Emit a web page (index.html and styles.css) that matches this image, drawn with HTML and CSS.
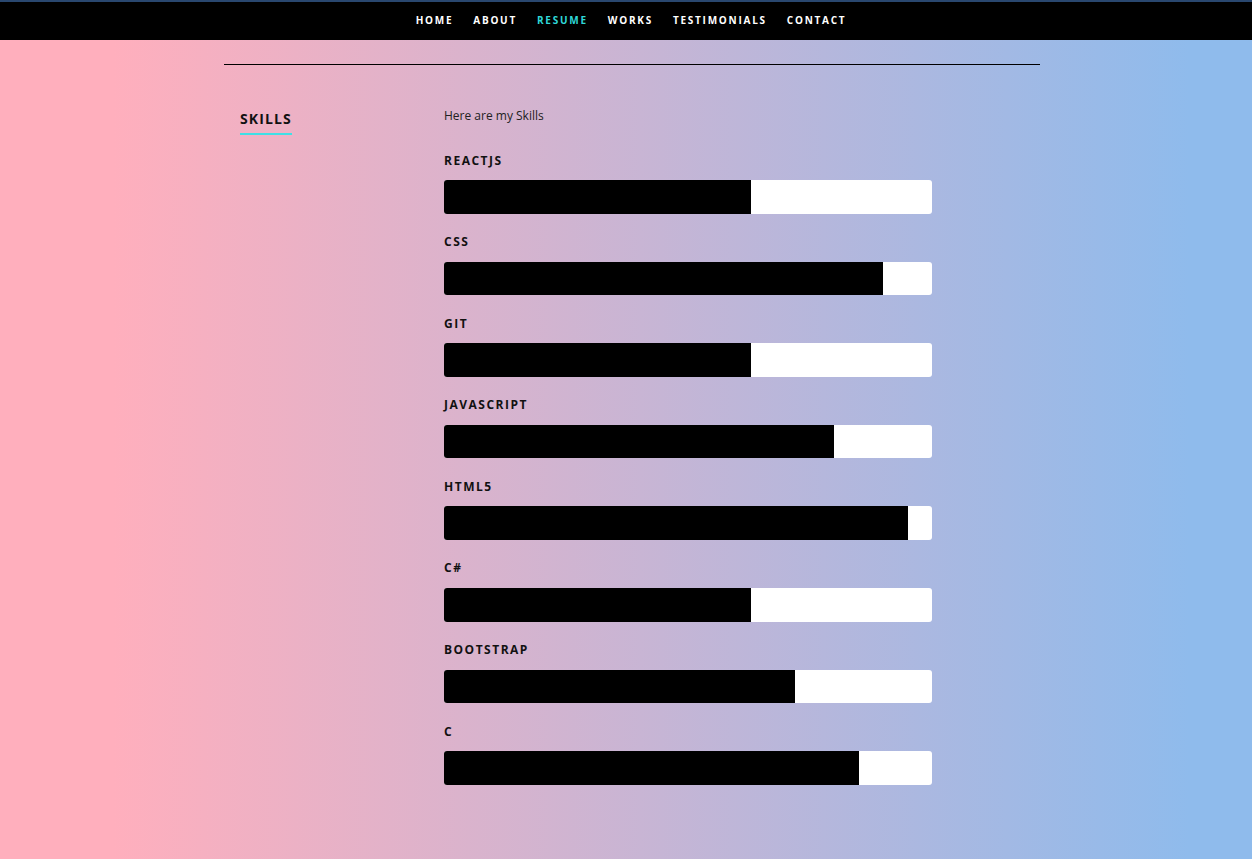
FILE: index.html
```html
<!DOCTYPE html>
<html lang="en">
<head>
<meta charset="utf-8">
<title>Resume - Skills</title>
<link rel="stylesheet" href="styles.css">
</head>
<body>
<nav class="nav">
  <ul class="nav-list">
    <li><a class="nav-link" href="#home">Home</a></li>
    <li><a class="nav-link" href="#about">About</a></li>
    <li><a class="nav-link current" href="#resume">Resume</a></li>
    <li><a class="nav-link" href="#works">Works</a></li>
    <li><a class="nav-link" href="#testimonials">Testimonials</a></li>
    <li><a class="nav-link" href="#contact">Contact</a></li>
  </ul>
</nav>
<main class="container">
  <hr class="divider">
  <section class="skills">
    <div class="skills-header">
      <h2 class="skills-title">Skills</h2>
    </div>
    <div class="skills-body">
      <p class="skills-intro">Here are my Skills</p>
      <ul class="bars">
        <li class="bar-item"><h3 class="bar-label">ReactJS</h3><div class="bar"><span class="bar-fill" style="width:63%"></span></div></li>
        <li class="bar-item"><h3 class="bar-label">CSS</h3><div class="bar"><span class="bar-fill" style="width:90%"></span></div></li>
        <li class="bar-item"><h3 class="bar-label">Git</h3><div class="bar"><span class="bar-fill" style="width:63%"></span></div></li>
        <li class="bar-item"><h3 class="bar-label">JavaScript</h3><div class="bar"><span class="bar-fill" style="width:80%"></span></div></li>
        <li class="bar-item"><h3 class="bar-label">HTML5</h3><div class="bar"><span class="bar-fill" style="width:95%"></span></div></li>
        <li class="bar-item"><h3 class="bar-label">C#</h3><div class="bar"><span class="bar-fill" style="width:63%"></span></div></li>
        <li class="bar-item"><h3 class="bar-label">Bootstrap</h3><div class="bar"><span class="bar-fill" style="width:72%"></span></div></li>
        <li class="bar-item"><h3 class="bar-label">C</h3><div class="bar"><span class="bar-fill" style="width:85%"></span></div></li>
      </ul>
    </div>
  </section>
</main>
</body>
</html>
```
FILE: styles.css
```css
* { box-sizing: border-box; }

html, body {
  margin: 0;
  padding: 0;
}

body {
  min-height: 859px;
  font-family: "Open Sans", "Liberation Sans", sans-serif;
  color: #111;
  background: linear-gradient(to right, #ffafbd 9%, #8fbbec 95%);
}

.nav {
  height: 40px;
  background: #000;
  border-top: 2px solid #29476f;
}

.nav-list {
  list-style: none;
  margin: 0;
  padding: 0 0 2px 10px;
  height: 38px;
  display: flex;
  justify-content: center;
  align-items: center;
}

.nav-link {
  display: block;
  padding: 0 10px;
  font-size: 10px;
  font-weight: 700;
  letter-spacing: 1.75px;
  line-height: 20px;
  text-transform: uppercase;
  text-decoration: none;
  color: #fff;
}

.nav-link.current {
  color: #2fd8d8;
}

.container {
  width: 816px;
  margin-left: 224px;
}

.divider {
  margin: 24px 0 0;
  border: 0;
  border-top: 1px solid #000;
  height: 0;
}

.skills {
  display: flex;
  padding-top: 40px;
}

.skills-header {
  width: 220px;
  padding-left: 16px;
  padding-top: 2px;
}

.skills-title {
  display: inline-block;
  margin: 0;
  font-size: 14px;
  line-height: 20px;
  font-weight: 700;
  letter-spacing: 1.1px;
  text-transform: uppercase;
  color: #111;
  padding-bottom: 4px;
  border-bottom: 2px solid #3ee0e6;
}

.skills-body {
  width: 488px;
}

.skills-intro {
  margin: 1px 0 24px;
  font-size: 12px;
  line-height: 20px;
  color: #222;
}

.bars {
  list-style: none;
  margin: 0;
  padding: 0;
}

.bar-item {
  margin-bottom: 18px;
}

.bar-label {
  margin: 0;
  padding: 1.5px 0 10.5px;
  font-size: 12px;
  line-height: 18px;
  font-weight: 700;
  letter-spacing: 1.5px;
  text-transform: uppercase;
  color: #111;
}

.bar {
  height: 33.6px;
  background: #fff;
  border-radius: 3px;
  overflow: hidden;
  display: flex;
}

.bar-fill {
  display: block;
  height: 100%;
  background: #000;
}
```
